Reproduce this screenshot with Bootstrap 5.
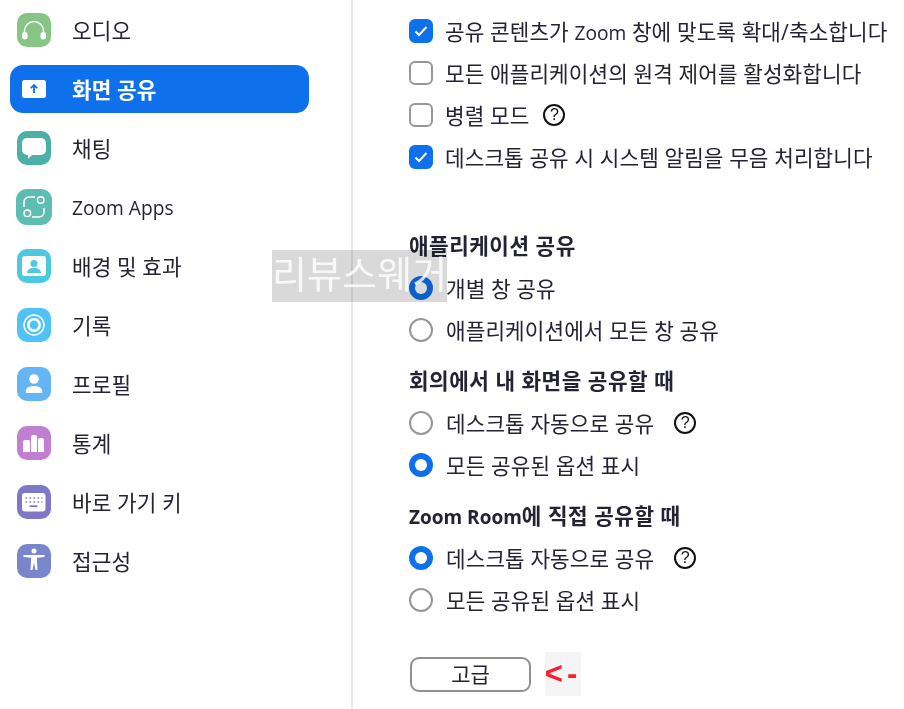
<!DOCTYPE html>
<html lang="ko">

<head>
  <meta charset="UTF-8" />
  <meta name="viewport" content="width=device-width, initial-scale=1.0" />
  <title>설정 - 화면 공유</title>
  <link href="https://cdn.jsdelivr.net/npm/bootstrap@5.3.0/dist/css/bootstrap.min.css" rel="stylesheet" />
  <style>
    html, body { height: 709px; overflow: hidden; }
    body {
      position: relative;
      background: #fff;
      color: #232333;
      font-family: "Open Sans", "Noto Sans CJK KR", sans-serif;
      font-size: 21.3px;
      letter-spacing: .1px;
    }
    .zm-lat { font-size: 19.2px; letter-spacing: 0; }
    .zm-side { width: 353px; height: 709px; padding: 6px 0 0 10px; border-right: 2px solid #e8e8ee; }
    .zm-item { width: 299px; height: 48px; margin-bottom: 11px; padding-left: 7px; gap: 21px; border-radius: 13px; }
    .zm-item > span { padding-top: 2px; }
    .zm-item > span.zm-lat { padding-top: 3px; }
    .zm-item.on { background: #0e71eb; color: #fff; font-weight: 700; }
    .zm-ico { width: 34px; height: 34px; flex: none; }
    .zm-ico.wide { width: 36px; height: 36px; margin: -1px; }
    .zm-main { padding: 10px 0 0 56px; }
    .zm-row { height: 42px; gap: 12px; white-space: nowrap; }
    .zm-row > span:first-of-type { padding-top: 2px; }
    .zm-row .form-check-input { width: 24px; height: 24px; margin: 0; flex: none; border: 2px solid #979797; background-color: #fff; }
    .zm-row .form-check-input[type=checkbox] { border-radius: 6px; }
    .zm-row .form-check-input[type=radio] { margin-right: 1px; }
    .zm-row .form-check-input:checked { background-color: #0e71eb; border-color: #0e71eb; }
    .zm-row .form-check-input[type=checkbox]:checked {
      background-size: 20px;
      background-image: url("data:image/svg+xml,%3csvg xmlns='http://www.w3.org/2000/svg' viewBox='0 0 20 20'%3e%3cpath fill='none' stroke='%23fff' stroke-width='2' d='m4.500 10.500 3.500 3.500 7.500-8'/%3e%3c/svg%3e");
    }
    .zm-row .form-check-input[type=radio]:checked { background-size: 24px; }
    .zm-head { height: 30px; line-height: 28px; font-weight: 700; letter-spacing: .5px; margin-bottom: 5px; white-space: nowrap; }
    .zm-head .zm-lat { font-size: 19px; }
    .zm-help { width: 22px; height: 22px; margin-left: 8px; border: 2px solid #111; font-family: "Liberation Sans", sans-serif; font-size: 16px; line-height: 1; color: #111; }
    .zm-help.near { margin-left: 2px; }
    .zm-adv { width: 121px; height: 35px; margin-left: 1px; padding: 1px 0 0; border: 2px solid #909090; border-radius: 9px; background: #fff; color: #232333; font-size: 21px; line-height: 1; }
    .zm-arrow { width: 36px; height: 44px; margin-left: 14px; background: #f5f5f5; color: #f5222d; font-size: 31px; font-weight: 700; font-family: "Liberation Sans", sans-serif; letter-spacing: 4px; }
    .zm-mark { position: absolute; left: 272px; top: 250px; width: 175px; height: 52px; color: rgba(255, 255, 255, .8); font-size: 38px; line-height: 46px; text-align: center; white-space: nowrap; }
    .zm-mark::before { content: ""; position: absolute; inset: 0; background: #d9d9d9; mix-blend-mode: multiply; }
    .zm-mark span { position: relative; }
    .mt-zm1 { margin-top: 54px; }
    .mt-zm2 { margin-top: 16px; }
    .mt-zm3 { margin-top: 31px; }
  </style>
</head>

<body>
  <div class="d-flex">
    <div class="zm-side flex-shrink-0">
      <div class="zm-item d-flex align-items-center">
        <svg class="zm-ico" viewBox="0 0 34 34"><rect width="34" height="34" rx="10" fill="#86c583"/><path d="M7.500 20v-2a9.500 9.500 0 0 1 19 0v2" fill="none" stroke="#fff" stroke-width="1.400"/><rect x="5" y="19" width="5.500" height="7.500" rx="2.700" fill="#fff"/><rect x="23.500" y="19" width="5.500" height="7.500" rx="2.700" fill="#fff"/></svg>
        <span>오디오</span>
      </div>
      <div class="zm-item on d-flex align-items-center">
        <svg class="zm-ico" viewBox="0 0 34 34"><rect x="5" y="8" width="24" height="18" rx="2.500" fill="#fff"/><path d="M17 21v-8M13.800 16.200 17 13l3.200 3.200" fill="none" stroke="#0e71eb" stroke-width="1.800"/></svg>
        <span>화면 공유</span>
      </div>
      <div class="zm-item d-flex align-items-center">
        <svg class="zm-ico" viewBox="0 0 34 34"><rect width="34" height="34" rx="10" fill="#4bb0a8"/><path d="M10 7h14a5 5 0 0 1 5 5v7a5 5 0 0 1-5 5H15l-4 4v-4.100A5 5 0 0 1 5 19v-7a5 5 0 0 1 5-5z" fill="#fff"/></svg>
        <span>채팅</span>
      </div>
      <div class="zm-item d-flex align-items-center">
        <svg class="zm-ico wide" viewBox="0 0 36 36"><rect width="36" height="36" rx="11" fill="#5cbdb0"/><g fill="none" stroke="#fff" stroke-width="1.500"><path d="M8 18v-5a5 5 0 0 1 5-5h6M28 19v4a5 5 0 0 1-5 5h-7"/><circle cx="24.700" cy="11" r="3.300"/><circle cx="11.300" cy="24.300" r="3.300"/></g></svg>
        <span class="zm-lat">Zoom Apps</span>
      </div>
      <div class="zm-item d-flex align-items-center">
        <svg class="zm-ico" viewBox="0 0 34 34"><rect width="34" height="34" rx="10" fill="#4cc9e0"/><rect x="5" y="7" width="24" height="20" rx="3" fill="#fff"/><circle cx="17" cy="14.500" r="3.500" fill="#4cc9e0"/><path d="M10 24c0-3.500 3-5 7-5s7 1.500 7 5z" fill="#4cc9e0"/></svg>
        <span>배경 및 효과</span>
      </div>
      <div class="zm-item d-flex align-items-center">
        <svg class="zm-ico" viewBox="0 0 34 34"><rect width="34" height="34" rx="10" fill="#4fc3f7"/><g fill="none" stroke="#fff"><circle cx="17" cy="17" r="10" stroke-width="1.500"/><circle cx="17" cy="17" r="5.700" stroke-width="2.600"/></g></svg>
        <span>기록</span>
      </div>
      <div class="zm-item d-flex align-items-center">
        <svg class="zm-ico" viewBox="0 0 34 34"><rect width="34" height="34" rx="10" fill="#63b5f5"/><circle cx="17" cy="12" r="4.800" fill="#fff"/><path d="M9 26c-1.500-4.500 3-7 8-7s9.500 2.500 8 7z" fill="#fff"/></svg>
        <span>프로필</span>
      </div>
      <div class="zm-item d-flex align-items-center">
        <svg class="zm-ico" viewBox="0 0 34 34"><rect width="34" height="34" rx="10" fill="#c07fd0"/><path d="M6 16a2 2 0 0 1 2-2h3a2 2 0 0 1 2 2v10H6zM14 11a2 2 0 0 1 2-2h2a2 2 0 0 1 2 2v15h-6zM21 14a2 2 0 0 1 2-2h2a2 2 0 0 1 2 2v12h-6z" fill="#fff"/></svg>
        <span>통계</span>
      </div>
      <div class="zm-item d-flex align-items-center">
        <svg class="zm-ico" viewBox="0 0 34 34"><rect width="34" height="34" rx="10" fill="#7f78c9"/><rect x="5" y="8" width="23.500" height="18.500" rx="3" fill="#fff"/><path d="M8.500 13h17M8.500 17h17" stroke="#7f78c9" stroke-width="1.600" stroke-dasharray="1.600 2.400" fill="none"/><rect x="12.500" y="20.300" width="8" height="1.800" fill="#7f78c9"/></svg>
        <span>바로 가기 키</span>
      </div>
      <div class="zm-item d-flex align-items-center">
        <svg class="zm-ico" viewBox="0 0 34 34"><rect width="34" height="34" rx="10" fill="#7a86cc"/><circle cx="17" cy="7" r="2.500" fill="#fff"/><path d="M6.500 11h21v2l-7.500.8v4.200l.5 8h-2l-1.500-7.500-1.500 7.500h-2l.5-8v-4.200l-7.500-.8z" fill="#fff"/></svg>
        <span>접근성</span>
      </div>
    </div>

    <div class="zm-main flex-grow-1">
      <div class="zm-row d-flex align-items-center"><input class="form-check-input" type="checkbox" checked /><span>공유 콘텐츠가 <span class="zm-lat">Zoom</span> 창에 맞도록 확대/축소합니다</span></div>
      <div class="zm-row d-flex align-items-center"><input class="form-check-input" type="checkbox" /><span>모든 애플리케이션의 원격 제어를 활성화합니다</span></div>
      <div class="zm-row d-flex align-items-center"><input class="form-check-input" type="checkbox" /><span>병렬 모드</span><span class="zm-help near rounded-circle d-flex align-items-center justify-content-center">?</span></div>
      <div class="zm-row d-flex align-items-center"><input class="form-check-input" type="checkbox" checked /><span>데스크톱 공유 시 시스템 알림을 무음 처리합니다</span></div>

      <div class="zm-head mt-zm1">애플리케이션 공유</div>
      <div class="zm-row d-flex align-items-center"><input class="form-check-input" type="radio" name="r1" checked /><span>개별 창 공유</span></div>
      <div class="zm-row d-flex align-items-center"><input class="form-check-input" type="radio" name="r1" /><span>애플리케이션에서 모든 창 공유</span></div>

      <div class="zm-head mt-zm2">회의에서 내 화면을 공유할 때</div>
      <div class="zm-row d-flex align-items-center"><input class="form-check-input" type="radio" name="r2" /><span>데스크톱 자동으로 공유</span><span class="zm-help rounded-circle d-flex align-items-center justify-content-center">?</span></div>
      <div class="zm-row d-flex align-items-center"><input class="form-check-input" type="radio" name="r2" checked /><span>모든 공유된 옵션 표시</span></div>

      <div class="zm-head mt-zm2"><span class="zm-lat">Zoom Room</span>에 직접 공유할 때</div>
      <div class="zm-row d-flex align-items-center"><input class="form-check-input" type="radio" name="r3" checked /><span>데스크톱 자동으로 공유</span><span class="zm-help rounded-circle d-flex align-items-center justify-content-center">?</span></div>
      <div class="zm-row d-flex align-items-center"><input class="form-check-input" type="radio" name="r3" /><span>모든 공유된 옵션 표시</span></div>

      <div class="d-flex align-items-center mt-zm3">
        <button type="button" class="btn zm-adv">고급</button>
        <span class="zm-arrow d-flex align-items-center justify-content-center">&lt;-</span>
      </div>
    </div>
  </div>

  <div class="zm-mark"><span>리뷰스웨거</span></div>

  <script src="https://cdn.jsdelivr.net/npm/bootstrap@5.3.0/dist/js/bootstrap.bundle.min.js"></script>
</body>

</html>
